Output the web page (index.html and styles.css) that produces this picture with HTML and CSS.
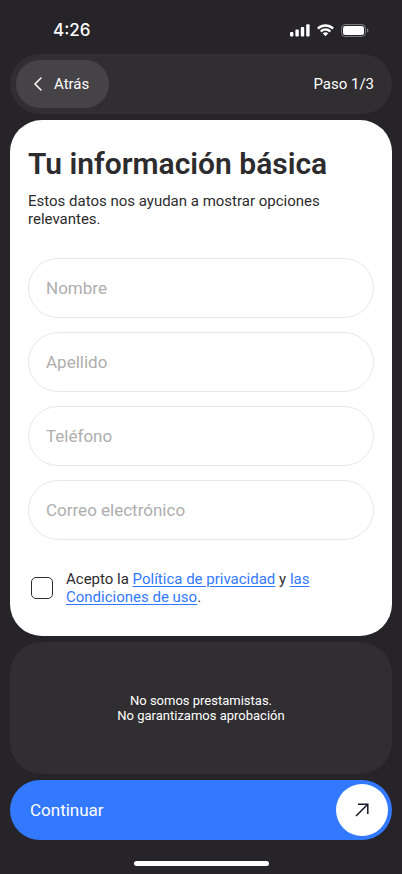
FILE: index.html
```html
<!DOCTYPE html>
<html lang="es">
<head>
<meta charset="utf-8">
<meta name="viewport" content="width=device-width, initial-scale=1">
<title>Tu información básica</title>
<link rel="stylesheet" href="styles.css">
</head>
<body>
<div class="screen">
  <header class="status">
    <time class="clock">4:26</time>
    <div class="status-icons">
      <svg width="20" height="13" viewBox="0 0 20 13" fill="#fff" aria-hidden="true">
        <rect x="0" y="8" width="3.4" height="4.6" rx="1"/>
        <rect x="5.4" y="5.6" width="3.4" height="7" rx="1"/>
        <rect x="10.8" y="3" width="3.4" height="9.6" rx="1"/>
        <rect x="16.2" y="0.2" width="3.4" height="12.4" rx="1"/>
      </svg>
      <svg width="17" height="13" viewBox="0 0 17 13" fill="#fff" aria-hidden="true">
        <path d="M8.5 2.7c2.4 0 4.7.9 6.5 2.6.1.1.3.1.5 0l1.200-1.300c.2-.2.2-.4 0-.5C12.100-.9 4.900-.9.3 3.500c-.2.1-.2.300 0 .5L1.500 5.300c.2.1.4.1.500 0C3.800 3.600 6.100 2.700 8.500 2.700z"/>
        <path d="M8.500 6.800c1.300 0 2.600.5 3.600 1.400.1.1.3.1.500 0l1.300-1.300c.1-.1.1-.4 0-.5-3-2.900-7.700-2.900-10.700 0-.2.1-.2.400 0 .5l1.200 1.300c.1.1.4.1.500 0 1-.9 2.300-1.400 3.600-1.400z"/>
        <path d="M11 9.600c.1-.1.1-.3 0-.5-1.400-1.200-3.600-1.200-5 0-.1.200-.1.400 0 .5l2.200 2.300c.2.100.4.100.500 0z"/>
      </svg>
      <svg width="28" height="13" viewBox="0 0 28 13" aria-hidden="true">
        <rect x="0.500" y="0.500" width="24" height="12" rx="3.800" fill="none" stroke="#fff" stroke-opacity=".4"/>
        <rect x="2" y="2" width="21" height="9" rx="2.500" fill="#fff"/>
        <path d="M26 4.500v4c.8-.3 1.400-1.100 1.400-2s-.6-1.700-1.400-2z" fill="#fff" fill-opacity=".45"/>
      </svg>
    </div>
  </header>

  <nav class="topbar">
    <button type="button" class="back">
      <svg width="8" height="14" viewBox="0 0 8 14" fill="none" stroke="#fff" stroke-width="1.500" stroke-linecap="round" stroke-linejoin="round" aria-hidden="true"><path d="M7 1 1 7l6 6"/></svg>
      <span>Atrás</span>
    </button>
    <span class="step">Paso 1/3</span>
  </nav>

  <form class="form" id="basic-info">
    <h1>Tu información básica</h1>
    <p class="intro">Estos datos nos ayudan a mostrar opciones relevantes.</p>
    <div class="fields">
      <input type="text" aria-label="Nombre" placeholder="Nombre">
      <input type="text" aria-label="Apellido" placeholder="Apellido">
      <input type="tel" aria-label="Teléfono" placeholder="Teléfono">
      <input type="email" aria-label="Correo electrónico" placeholder="Correo electrónico">
    </div>
    <div class="consent">
      <input type="checkbox" id="accept">
      <label for="accept">Acepto la <a href="#privacidad">Política de privacidad</a> y <a href="#condiciones">las Condiciones de uso</a>.</label>
    </div>
  </form>

  <aside class="notice">
    <p>No somos prestamistas.<br>No garantizamos aprobación</p>
  </aside>

  <button type="submit" form="basic-info" class="continue">
    <span>Continuar</span>
    <span class="arrow">
      <svg width="14" height="14" viewBox="0 0 14 14" fill="none" stroke="#1b1728" stroke-width="1.500" aria-hidden="true"><path d="M1 13 12.500 1.500M3 1.200h9.800V11"/></svg>
    </span>
  </button>
  <div class="home"></div>
</div>
</body>
</html>
```
FILE: styles.css
```css
* {
  box-sizing: border-box;
}

body {
  margin: 0;
  background: #262428;
  color: #2c2c2e;
  font-family: Roboto, "Liberation Sans", sans-serif;
  font-size: 15px;
  line-height: 18px;
}

h1,
p {
  margin: 0;
}

button,
input {
  margin: 0;
  border: 0;
  font: inherit;
}

svg {
  display: block;
  flex: none;
}

.screen {
  display: flex;
  flex-direction: column;
  gap: 6px;
  min-height: 100vh;
  padding: 0 10px 8px;
}

.status {
  display: flex;
  align-items: center;
  justify-content: space-between;
  height: 48px;
  padding: 12px 23px 0 43px;
  color: #fff;
}

.clock {
  font-family: Inter, sans-serif;
  font-size: 17px;
  font-weight: 500;
}

.status-icons {
  display: flex;
  align-items: center;
  gap: 7px;
}

.topbar {
  display: flex;
  align-items: center;
  justify-content: space-between;
  padding: 6px 18px 6px 6px;
  border-radius: 30px;
  background: #302e31;
  color: #fff;
}

.back {
  display: flex;
  align-items: center;
  gap: 12px;
  height: 48px;
  padding: 0 20px 0 18px;
  border-radius: 24px;
  background: #454346;
  color: #fff;
}

.form {
  padding: 26px 18px 30px;
  border-radius: 32px;
  background: #fff;
}

h1 {
  font-size: 30px;
  font-weight: 600;
  line-height: 36px;
}

.intro {
  margin-top: 10px;
}

.fields {
  display: grid;
  gap: 14px;
  margin-top: 30px;
}

.fields input {
  width: 100%;
  height: 60px;
  padding: 0 17px;
  border: 1px solid #e8e8e8;
  border-radius: 30px;
  background: #fff;
  color: #2c2c2e;
  font-size: 17px;
}

.fields input::placeholder {
  color: #aeaeae;
  opacity: 1;
}

.consent {
  display: flex;
  align-items: center;
  gap: 13px;
  margin-top: 30px;
  padding-left: 3px;
}

.consent input {
  flex: none;
  width: 22px;
  height: 22px;
  border: 1px solid #2c2c2e;
  border-radius: 5px;
  appearance: none;
}

.consent input:checked {
  background: #3279ff;
}

.consent a {
  color: #3279ff;
  text-underline-offset: 2px;
}

.notice {
  display: flex;
  flex: 1;
  align-items: center;
  justify-content: center;
  border-radius: 32px;
  background: #302e31;
  color: #fff;
  font-size: 13px;
  line-height: 15px;
  text-align: center;
}

.continue {
  display: flex;
  align-items: center;
  justify-content: space-between;
  padding: 4px 4px 4px 20px;
  border-radius: 30px;
  background: #3279ff;
  color: #fff;
  font-size: 17px;
}

.arrow {
  display: grid;
  place-items: center;
  width: 52px;
  height: 52px;
  border-radius: 50%;
  background: #fff;
}

.home {
  align-self: center;
  width: 135px;
  height: 5px;
  margin-top: 15px;
  border-radius: 3px;
  background: #fff;
}
```
